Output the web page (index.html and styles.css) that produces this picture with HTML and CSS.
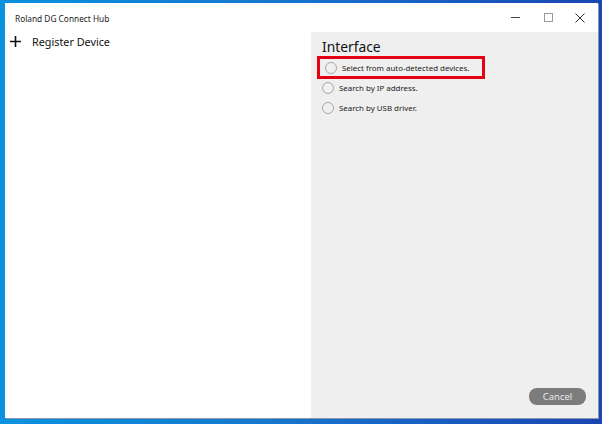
FILE: index.html
```html
<!DOCTYPE html>
<html lang="en">
<head>
    <meta charset="UTF-8">
    <title>Roland DG Connect Hub</title>
    <link rel="stylesheet" href="styles.css">
</head>
<body>
<div class="frame">
    <div class="window">
        <div class="titlebar">
            <span class="title">Roland DG Connect Hub</span>
            <div class="controls">
                <span class="ctl ctl-min"></span>
                <span class="ctl ctl-max"></span>
                <span class="ctl ctl-close">
                    <svg width="10" height="10" viewBox="0 0 10 10"><path d="M0.5 0.5 L9.5 9.5 M9.5 0.5 L0.5 9.5" stroke="#333" stroke-width="1"/></svg>
                </span>
            </div>
        </div>
        <div class="content">
            <div class="side">
                <div class="register">
                    <svg width="11" height="11" viewBox="0 0 11 11"><path d="M5.5 0 V11 M0 5.5 H11" stroke="#111" stroke-width="1.6"/></svg>
                    <span>Register Device</span>
                </div>
            </div>
            <div class="panel">
                <h2>Interface</h2>
                <div class="options">
                    <label class="option picked"><span class="radio"></span>Select from auto-detected devices.</label>
                    <label class="option"><span class="radio"></span>Search by IP address.</label>
                    <label class="option"><span class="radio"></span>Search by USB driver.</label>
                </div>
                <div class="actions">
                    <button class="cancel">Cancel</button>
                </div>
            </div>
        </div>
    </div>
</div>
</body>
</html>
```

FILE: styles.css
```css
body {
    margin: 0;
    background: #ffffff;
    font-family: "Noto Sans", "Open Sans", sans-serif;
    color: #222;
}
.frame {
    width: 602px;
    height: 424px;
    box-sizing: border-box;
    padding: 3px 4px 6px 5px;
    background: linear-gradient(90deg, #0a92de 0%, #1677cf 45%, #1a45b4 100%);
}
.window {
    height: 100%;
    display: flex;
    flex-direction: column;
    background: #ffffff;
    box-shadow: 1px 1px 0 #8d99a8;
}
.titlebar {
    height: 29px;
    display: flex;
    align-items: center;
    justify-content: space-between;
    padding-left: 10px;
}
.title {
    font-size: 8.3px;
    color: #222;
    margin-top: 2px;
}
.controls {
    display: flex;
    align-items: center;
    height: 100%;
}
.ctl {
    width: 33px;
    height: 100%;
    display: flex;
    align-items: center;
    justify-content: center;
}
.ctl-min::before {
    content: "";
    width: 9px;
    height: 1px;
    background: #444;
}
.ctl-max::before {
    content: "";
    width: 7px;
    height: 7px;
    border: 1px solid #999;
}
.ctl-close {
    width: 30px;
    margin-right: 3px;
}
.content {
    flex: 1;
    display: flex;
}
.side {
    width: 306px;
    background: #ffffff;
}
.register {
    display: flex;
    align-items: center;
    gap: 11px;
    padding: 2px 0 0 5px;
    font-size: 10.8px;
    color: #111;
}
.panel {
    flex: 1;
    background: #efefef;
    display: flex;
    flex-direction: column;
    padding: 5px 12px 13px 11px;
}
.panel h2 {
    margin: 0;
    font-size: 13.8px;
    font-weight: normal;
    line-height: 20px;
    color: #111;
}
.options {
    display: flex;
    flex-direction: column;
    margin-top: -1px;
}
.option {
    display: flex;
    align-items: center;
    gap: 5px;
    height: 20px;
    font-size: 7.9px;
    color: #222;
}
.option.picked {
    box-sizing: border-box;
    width: 168px;
    height: 23px;
    margin-left: -5px;
    padding-left: 5px;
    border: 3px solid #e60012;
    margin-bottom: -1px;
}
.radio {
    width: 12px;
    height: 12px;
    border-radius: 50%;
    border: 1px solid #a8a8a8;
    background: #f0f0f0;
    box-sizing: border-box;
}
.actions {
    margin-top: auto;
    display: flex;
    justify-content: flex-end;
}
.cancel {
    width: 57px;
    height: 17px;
    border: none;
    border-radius: 8px;
    background: #7c7c7c;
    color: #e8e8e8;
    font-family: "Noto Sans", "Open Sans", sans-serif;
    font-size: 9.5px;
    padding: 0;
}
```
